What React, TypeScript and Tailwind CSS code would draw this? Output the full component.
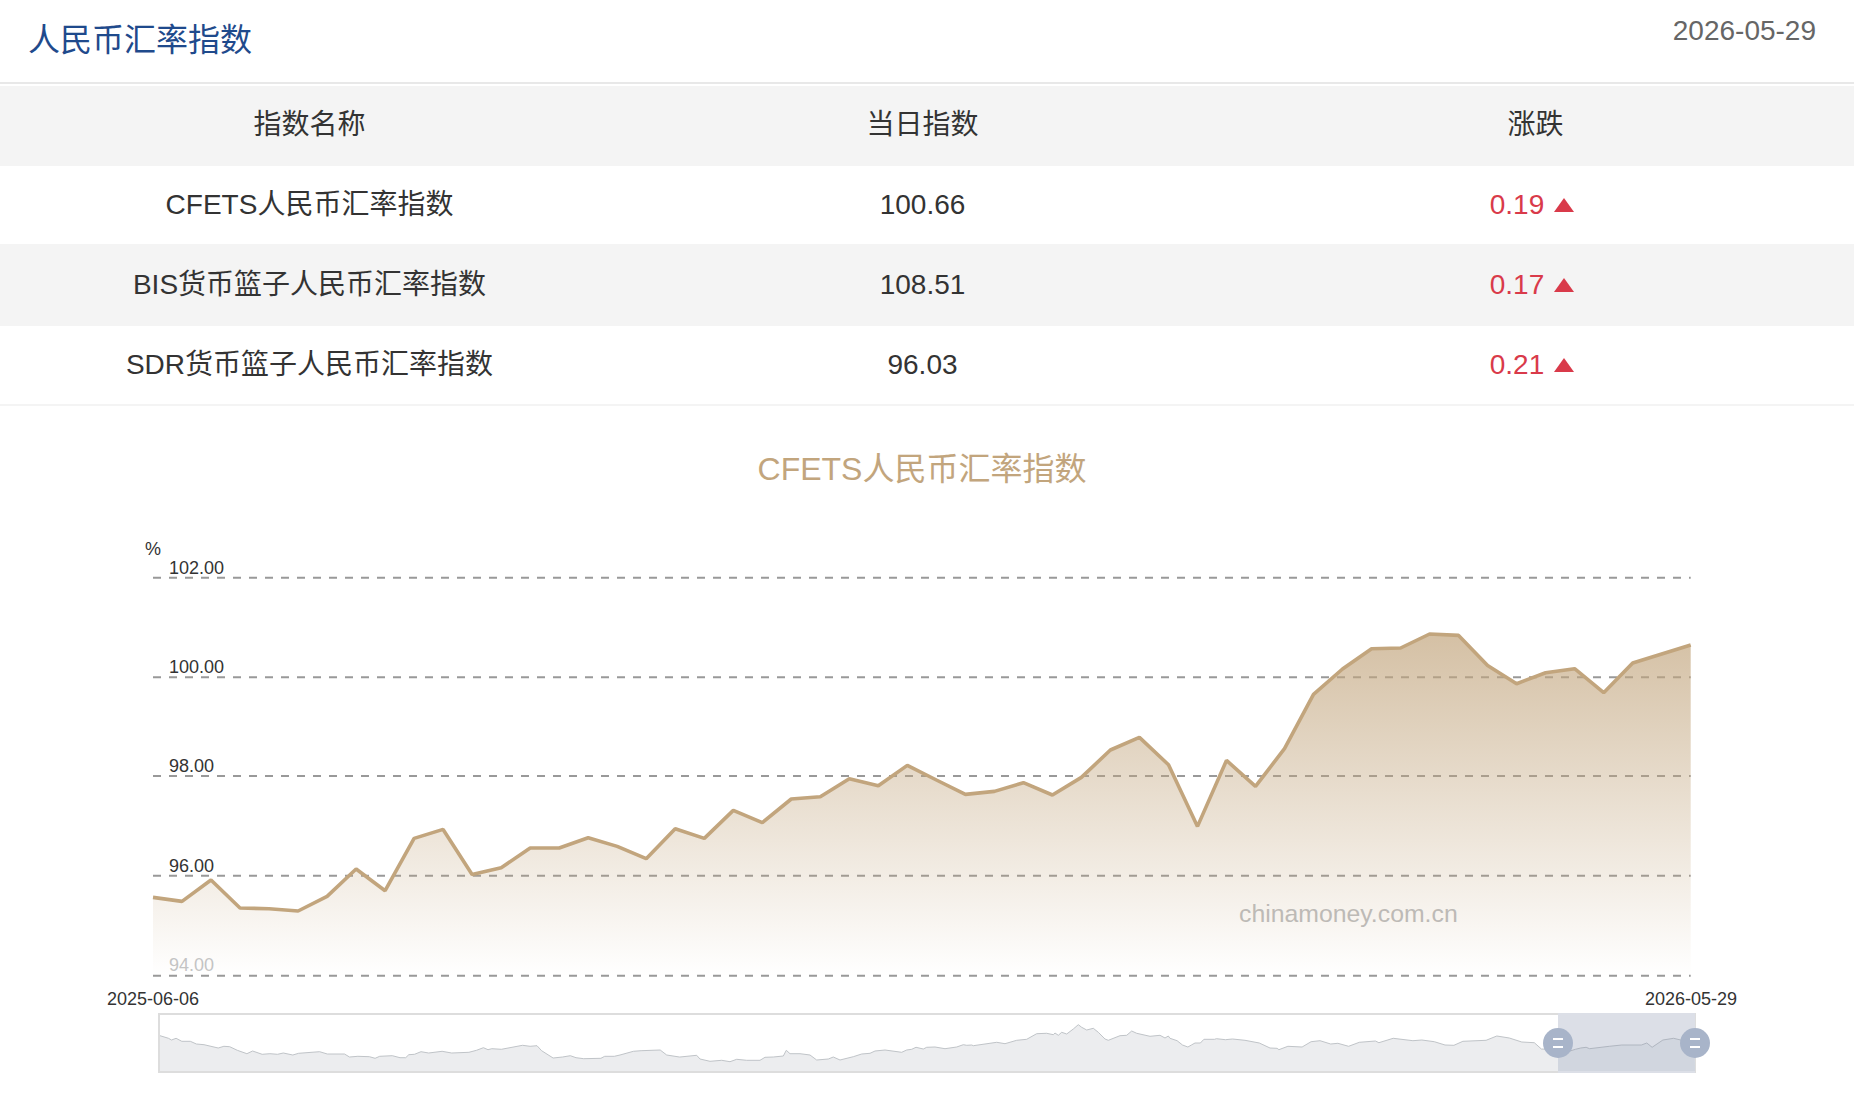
const mainY = [
  897.7, 901.7, 880.3, 908.3, 909, 911.3, 896.7, 869.3, 891, 838.7, 829.7, 874.7, 868, 848.3, 848.3, 838, 846.7, 859,
  829, 838.7, 810.7, 823, 799.3, 797, 779, 786, 765.7, 780.3, 794.7, 791.7, 783, 795.3, 777.7, 750.3, 737.7, 765,
  826.7, 760.7, 786.7, 749, 694.7, 669.3, 649, 648.3, 634.3, 635.7, 665.7, 684, 673, 669, 693, 663.3, 654.3, 645.3,
].map((y) => y + 0.7);

const PLOT_LEFT = 153;
const PLOT_RIGHT = 1690.7;
const STEP = (PLOT_RIGHT - PLOT_LEFT) / 53;
const linePoints = mainY.map((y, i) => `${(PLOT_LEFT + i * STEP).toFixed(1)},${y.toFixed(1)}`).join(' ');
const areaPoints = `${PLOT_LEFT},977 ${linePoints} ${PLOT_RIGHT},977`;

const ticks = [
  { label: '102.00', y: 578.7, baseline: 575, fill: '#333333' },
  { label: '100.00', y: 678.3, baseline: 674, fill: '#333333' },
  { label: '98.00', y: 777, baseline: 773, fill: '#333333' },
  { label: '96.00', y: 876.7, baseline: 873, fill: '#333333' },
  { label: '94.00', y: 976.7, baseline: 971.5, fill: '#c4c4c4' },
];

// overview series, read off three stretches of the slider
const miniA = [
  [183, 170], [205, 178], [213, 183], [225, 178], [240, 187], [262, 187], [278, 195], [298, 197], [335, 207], [350, 202],
  [365, 203], [385, 214], [410, 224], [425, 216], [450, 226], [470, 224], [490, 226], [505, 222], [530, 228], [545, 223],
  [600, 218], [620, 225], [665, 225], [678, 234], [700, 232], [730, 233], [745, 238], [757, 232], [790, 230], [810, 236],
  [825, 236], [833, 227], [848, 226], [865, 218], [885, 222], [920, 217], [945, 222], [990, 220], [1010, 214], [1028, 206],
  [1040, 212], [1050, 209], [1075, 211], [1130, 199], [1150, 202], [1168, 200], [1180, 215], [1210, 237], [1235, 234],
  [1255, 230], [1270, 236], [1290, 239], [1335, 238], [1345, 232], [1370, 232], [1385, 228], [1420, 217], [1440, 215],
  [1490, 213], [1507, 228], [1540, 234],
].map(([x, y]) => [90 + x / 2.613, 980 + y / 3]);
const miniB = [
  [0, 234], [50, 229], [60, 240], [90, 247], [125, 244], [150, 248], [170, 241], [200, 244], [240, 244], [255, 235],
  [280, 234], [310, 231], [319, 214], [330, 224], [360, 224], [390, 228], [410, 243], [445, 240], [460, 234], [480, 243],
  [520, 233], [545, 225], [570, 223], [585, 216], [615, 213], [665, 220], [680, 213], [695, 211], [708, 205], [730, 210],
  [740, 205], [765, 204], [795, 209], [830, 204], [850, 197], [860, 199], [875, 198], [880, 200], [950, 190], [975, 194],
  [1010, 184], [1040, 181], [1070, 164], [1100, 163], [1120, 167], [1125, 162], [1135, 169], [1145, 160], [1160, 165],
  [1180, 150], [1195, 137], [1205, 145], [1220, 153], [1240, 148], [1255, 160], [1275, 180], [1285, 184], [1320, 170],
  [1340, 169], [1355, 156], [1370, 163], [1410, 172], [1440, 169], [1455, 177], [1465, 171],
].map(([x, y]) => [680 + x / 3, 980 + y / 3]);
const miniC = [
  [0, 178], [20, 185], [35, 198], [50, 204], [60, 198], [70, 192], [85, 192], [95, 181], [125, 181], [130, 179], [155, 182],
  [175, 180], [210, 184], [250, 192], [280, 207], [300, 208], [305, 212], [330, 202], [370, 204], [395, 188], [420, 185],
  [450, 195], [470, 193], [500, 202], [530, 190], [575, 186], [585, 191], [625, 178], [680, 185], [705, 183], [740, 188],
  [770, 198], [795, 199], [820, 187], [885, 184], [915, 171], [950, 177], [985, 189], [1020, 191], [1040, 210], [1086, 212],
  [1120, 216], [1135, 211], [1150, 207], [1165, 205], [1175, 209], [1230, 202], [1265, 198], [1320, 198], [1335, 192],
  [1350, 205], [1380, 183], [1410, 178], [1430, 183], [1468, 183],
].map(([x, y]) => [1170 + x / 2.8, 980 + y / 3]);
const miniLine = [...miniA, ...miniB, ...miniC].map(([x, y]) => `${x.toFixed(1)},${y.toFixed(1)}`).join(' ');
const miniArea = `160,1072 ${miniLine} 1695,1072`;

const rows = [
  { name: 'CFETS人民币汇率指数', value: '100.66', change: '0.19', bg: 'bg-white' },
  { name: 'BIS货币篮子人民币汇率指数', value: '108.51', change: '0.17', bg: 'bg-[#f4f4f4]' },
  { name: 'SDR货币篮子人民币汇率指数', value: '96.03', change: '0.21', bg: 'bg-white' },
];

function SliderHandle({ cx }: { cx: number }) {
  return (
    <g>
      <circle cx={cx} cy={1044} r={15} fill="#a8b4c9" />
      <rect x={cx - 5} y={1039} width={10} height={2} fill="#ffffff" />
      <rect x={cx - 5} y={1047} width={10} height={2} fill="#ffffff" />
    </g>
  );
}

export default function App() {
  return (
    <div className="w-[1854px] h-[1120px] overflow-hidden bg-white text-[#333333] [font-family:'Liberation_Sans','Noto_Sans_CJK_SC',sans-serif]">
      {/* Header */}
      <div className="flex h-[84px] justify-between border-b-2 border-[#e8e8e8] pl-[28px] pr-[38px]">
        <h2 className="pt-[20px] text-[32px] leading-[40px] font-normal text-[#1f4a8c]">人民币汇率指数</h2>
        <span className="pt-[14px] text-[28px] leading-[34px] text-[#666666]">2026-05-29</span>
      </div>

      {/* Table */}
      <div className="mt-[2px]">
        <div className="grid h-[80px] grid-cols-[613px_613px_613px] items-center border-b-2 border-[#f4f4f4] bg-[#f4f4f4] pl-[3px] text-center text-[28px]">
          <div>指数名称</div>
          <div>当日指数</div>
          <div>涨跌</div>
        </div>
        {rows.map((row) => (
          <div
            key={row.name}
            className={`grid h-[80px] grid-cols-[613px_613px_613px] items-center border-b-2 border-[#f4f4f4] pl-[3px] text-center text-[28px] ${row.bg}`}
          >
            <div>{row.name}</div>
            <div>{row.value}</div>
            <div className="flex items-center justify-center gap-[10px] pr-[7px] text-[#d93a4a]">
              <span>{row.change}</span>
              <svg width="20" height="14" viewBox="0 0 20 14">
                <path d="M10 0 L20 14 L0 14 Z" fill="#d93a4a" />
              </svg>
            </div>
          </div>
        ))}
      </div>

      {/* Chart */}
      <h3 className="mt-[45px] w-[1844px] text-center text-[32px] leading-[36px] font-normal text-[#c2a57d]">
        CFETS人民币汇率指数
      </h3>
      <svg width="1854" height="633" viewBox="0 488 1854 633" className="block">
        <defs>
          <linearGradient id="areaFill" gradientUnits="userSpaceOnUse" x1="0" y1="634" x2="0" y2="977">
            <stop offset="0" stopColor="#c2a57d" stopOpacity="0.7" />
            <stop offset="1" stopColor="#c2a57d" stopOpacity="0" />
          </linearGradient>
          <clipPath id="selected">
            <rect x="1558" y="1014" width="137" height="60" />
          </clipPath>
        </defs>

        {ticks.map((t) => (
          <line key={t.label} x1={PLOT_LEFT} x2={PLOT_RIGHT} y1={t.y} y2={t.y} stroke="#999999" strokeWidth="2" strokeDasharray="8 8" />
        ))}
        <polygon points={areaPoints} fill="url(#areaFill)" />
        <polyline points={linePoints} fill="none" stroke="#c2a57d" strokeWidth="3.6" strokeLinejoin="bevel" />

        <text x="145" y="556" fontSize="18" fill="#333333">%</text>
        {ticks.map((t) => (
          <text key={t.label} x="169" y={t.baseline} fontSize="18" fill={t.fill}>{t.label}</text>
        ))}
        <text x="1239" y="923" fontSize="24.8" fill="#bdbab6">chinamoney.com.cn</text>
        <text x="153" y="1006" fontSize="18" fill="#333333" textAnchor="middle">2025-06-06</text>
        <text x="1691" y="1006" fontSize="18" fill="#333333" textAnchor="middle">2026-05-29</text>

        {/* Range slider */}
        <rect x="159" y="1015" width="1536" height="58" fill="#ffffff" stroke="#dddddd" strokeWidth="2" />
        <polygon points={miniArea} fill="#ecedef" />
        <polyline points={miniLine} fill="none" stroke="#c0c4c8" strokeWidth="1" />
        <rect x="1558" y="1014" width="137" height="60" fill="#dcdfe7" />
        <g clipPath="url(#selected)">
          <polygon points={miniArea} fill="#d1d6df" />
          <polyline points={miniLine} fill="none" stroke="#b0b6c0" strokeWidth="1" />
        </g>
        <SliderHandle cx={1558} />
        <SliderHandle cx={1695} />
      </svg>
    </div>
  );
}
